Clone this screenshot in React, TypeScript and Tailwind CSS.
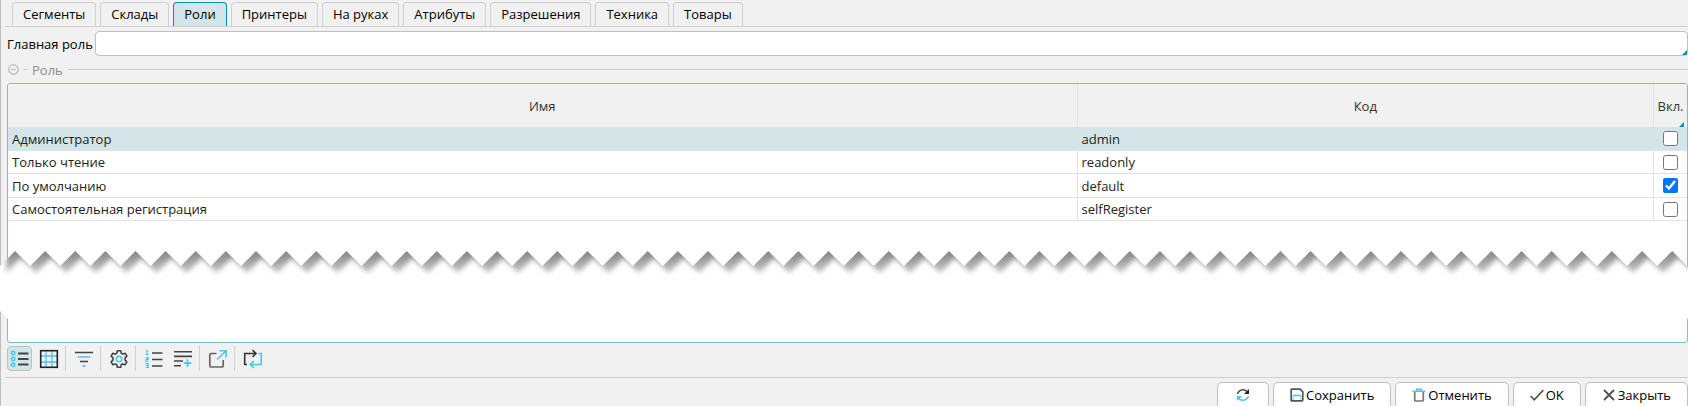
import { useState, type ReactNode } from "react";

const TABS = [
  "Сегменты",
  "Склады",
  "Роли",
  "Принтеры",
  "На руках",
  "Атрибуты",
  "Разрешения",
  "Техника",
  "Товары",
];

const ROLES = [
  { name: "Администратор", code: "admin", on: false },
  { name: "Только чтение", code: "readonly", on: false },
  { name: "По умолчанию", code: "default", on: true },
  { name: "Самостоятельная регистрация", code: "selfRegister", on: false },
];

const TOOTH = 30.13;
const TEETH = 120;

function zigzag() {
  let d = "";
  for (let i = 0; i < TEETH; i++) {
    d += ` L${(i * TOOTH + 15).toFixed(2)} 0 L${((i + 1) * TOOTH).toFixed(2)} 15`;
  }
  return d;
}

const TEAR = `M0 -20 L0 15${zigzag()} V-20 Z`;
const BAND = `M0 15${zigzag()} V68 H8 L0 60 Z`;

function Tear() {
  return (
    <svg className="pointer-events-none absolute bottom-[24px] -left-px h-[68px] w-[calc(100%+1px)]" aria-hidden="true">
      <defs>
        <clipPath id="band">
          <path d={BAND} />
        </clipPath>
        <filter id="soft" x="-1%" y="-50%" width="102%" height="200%">
          <feGaussianBlur stdDeviation="2.4" />
        </filter>
        <linearGradient id="fade" gradientUnits="userSpaceOnUse" x1="0" y1="-6" x2="0" y2="14">
          <stop offset="0" stopColor="#868686" />
          <stop offset="1" stopColor="#c4c4c4" />
        </linearGradient>
      </defs>
      <g clipPath="url(#band)">
        <rect width="100%" height="68" fill="#fff" />
        <path d={TEAR} fill="url(#fade)" transform="translate(6 7)" filter="url(#soft)" />
      </g>
    </svg>
  );
}

const DARK = "#444";
const BLUE = "#4fc3f0";

function Icon({ children, size = 20 }: { children: ReactNode; size?: number }) {
  return (
    <svg width={size} height={size} viewBox={`0 0 ${size} ${size}`} fill="none" stroke={DARK} strokeWidth="1.5" aria-hidden="true">
      {children}
    </svg>
  );
}

const ListIcon = () => (
  <Icon>
    <g stroke={BLUE} strokeWidth="1.5">
      <circle cx="3.2" cy="4" r="1.7" />
      <circle cx="3.2" cy="10" r="1.7" />
      <circle cx="3.2" cy="15.8" r="1.7" />
    </g>
    <path d="M8 4.5h10.5M8 10h10.5M8 15.5h10.5" strokeWidth="1.8" />
  </Icon>
);

const GridIcon = () => (
  <Icon>
    <path d="M7 2v16M13 2v16M2 7h16M2 13h16" stroke={BLUE} strokeWidth="1.3" />
    <rect x="1.7" y="1.7" width="16.6" height="16.6" stroke="#222" strokeWidth="1.6" />
  </Icon>
);

const FilterIcon = () => (
  <Icon>
    <path d="M1 3.5h18M6 12.5h8" strokeWidth="1.7" />
    <path d="M3.500 8h13M8.300 17h3.400" stroke={BLUE} strokeWidth="1.6" />
  </Icon>
);

const GearIcon = () => (
  <Icon>
    <path
      d="M8.300 1.700h3.400l.5 2.500 1.600.9 2.400-.8 1.700 2.900-1.900 1.700v2.200l1.900 1.700-1.700 2.900-2.400-.8-1.600.9-.5 2.500H8.300l-.5-2.500-1.600-.9-2.400.8-1.700-2.900L4 11.100V8.900L2.100 7.200l1.700-2.900 2.400.8 1.600-.9z"
      strokeLinejoin="round"
      strokeWidth="1.600"
    />
    <circle cx="10" cy="10" r="2.700" stroke={BLUE} />
  </Icon>
);

const NumberedIcon = () => (
  <Icon>
    <path d="M8 4h10.500M8 10.500h10.500M8 17h10.500" strokeWidth="1.7" />
    <g stroke={BLUE} strokeWidth="1.200">
      <path d="M1.800 2.300l1.300-.8v4M1.700 5.500h2.900" />
      <path d="M1.700 8.700h2.600v1.700H1.900v1.900h2.700" />
      <path d="M1.700 14.700h2.600v3.800H1.700M2.200 16.600h2" />
    </g>
  </Icon>
);

const AddRowIcon = () => (
  <Icon>
    <path d="M1 2.700h18M1 7.400h18M1 12h9M1 16.700h7" strokeWidth="1.6" />
    <path d="M14.500 10.500v7.500M10.800 14.200h7.500" stroke={BLUE} strokeWidth="1.800" />
  </Icon>
);

const ExternalIcon = () => (
  <Icon>
    <path d="M8.500 4.500H3a1.200 1.200 0 0 0-1.200 1.200v11.100A1.200 1.200 0 0 0 3 18h11a1.200 1.200 0 0 0 1.200-1.200V11" stroke="#666" strokeWidth="1.700" />
    <path d="M9 10.500L18 2M11.500 1.800H18.200V8.500" stroke={BLUE} strokeWidth="1.600" />
  </Icon>
);

const LoopIcon = () => (
  <Icon>
    <path d="M4 15.500H1.700V4.500H13M9.500 1.200L13 4.500L9.500 7.800" stroke="#333" strokeWidth="1.600" />
    <path d="M15.500 4.500h2.800v11H7.500M10.800 12.200L7.300 15.500l3.500 3.300" stroke={BLUE} strokeWidth="1.600" />
  </Icon>
);

const RefreshIcon = () => (
  <Icon size={14}>
    <path d="M1.500 6A5.700 5.700 0 0 1 11.500 4" strokeWidth="1.400" />
    <path d="M13 1v5H8z" fill="#222" stroke="none" />
    <path d="M12.500 8A5.700 5.700 0 0 1 2.500 10" stroke={BLUE} strokeWidth="1.400" />
    <path d="M1 13V8h5z" fill={BLUE} stroke="none" />
  </Icon>
);

const SaveIcon = () => (
  <Icon size={14}>
    <path d="M1.700 1.200h8.300l2.800 2.600v8.200a.9.900 0 0 1-.9.900H1.700a.5.500 0 0 1-.5-.5V1.700a.5.500 0 0 1 .5-.5z" stroke="#555" strokeWidth="1.700" />
    <path d="M3 7.500h8" stroke={BLUE} strokeWidth="1.600" />
    <path d="M3 8v4M11 8v4" stroke={BLUE} strokeWidth=".8" />
  </Icon>
);

const TrashIcon = () => (
  <Icon size={14}>
    <path d="M2.700 4v8a1 1 0 0 0 1 1h6.600a1 1 0 0 0 1-1V4" stroke="#777" strokeWidth="1.700" />
    <path d="M.5 3.200h13M4.800 3V1.200h4.400V3" stroke={BLUE} strokeWidth="1.500" />
  </Icon>
);

const CheckIcon = () => (
  <Icon size={14}>
    <path d="M.7 8l3.600 3.800L13.300 2.200" stroke="#555" strokeWidth="1.700" />
  </Icon>
);

const CloseIcon = () => (
  <Icon size={14}>
    <path d="M2 2l10 10M12 2L2 12" stroke="#555" strokeWidth="2" />
  </Icon>
);

const TOOLS: { label: string; icon: ReactNode }[][] = [
  [
    { label: "Список", icon: <ListIcon /> },
    { label: "Сетка", icon: <GridIcon /> },
  ],
  [{ label: "Фильтр", icon: <FilterIcon /> }],
  [{ label: "Настройки", icon: <GearIcon /> }],
  [
    { label: "Нумерация", icon: <NumberedIcon /> },
    { label: "Добавить строку", icon: <AddRowIcon /> },
  ],
  [{ label: "Открыть", icon: <ExternalIcon /> }],
  [{ label: "Повторить", icon: <LoopIcon /> }],
];

function Corner({ className }: { className: string }) {
  return <span className={`pointer-events-none absolute size-[5px] bg-[#0a8bbd] [clip-path:polygon(100%_0,100%_100%,0_100%)] ${className}`} />;
}

function ActionButton({ icon, label, text }: { icon: ReactNode; label?: string; text?: string }) {
  return (
    <button
      type="button"
      aria-label={label}
      className={`flex h-[27px] items-center gap-[2px] rounded-[5px] border border-[#c0c0c0] bg-white pb-[2px] text-black ${
        text ? "px-4" : "px-[18px]"
      }`}
    >
      {icon}
      {text}
    </button>
  );
}

export default function App() {
  const [tab, setTab] = useState("Роли");
  const [view, setView] = useState("Список");
  const [enabled, setEnabled] = useState(ROLES.map((r) => r.on));

  return (
    <div className="flex h-screen flex-col overflow-hidden bg-[#f1f1f1] pl-px font-['Open_Sans','Noto_Sans',sans-serif] text-[13px] leading-[18px] text-black shadow-[inset_1px_0_0_#bdbdbd]">
      <div role="tablist" className="ml-1 flex shrink-0 gap-1 border-b border-[#cfcfcf] pt-[2px] pl-[7px]">
        {TABS.map((t) => (
          <button
            key={t}
            type="button"
            role="tab"
            aria-selected={t === tab}
            onClick={() => setTab(t)}
            className={`h-6 rounded-t-[4px] border border-b-0 px-[10px] pb-[2px] whitespace-nowrap ${
              t === tab ? "border-[#0a8bbd] bg-[#d4e5e9]" : "border-[#cfcfcf]"
            }`}
          >
            {t}
          </button>
        ))}
      </div>

      <div className="mt-1 flex shrink-0 items-center gap-[2px] pl-[6px]">
        <label htmlFor="main-role" className="whitespace-nowrap">
          Главная роль
        </label>
        <div className="relative flex flex-1">
          <input id="main-role" type="text" className="h-[25px] w-full rounded-[4px] border border-[#c0c0c0] bg-white px-1 outline-none" />
          <Corner className="right-px bottom-px" />
        </div>
      </div>

      <div className="flex h-[27px] shrink-0 items-center pl-[7px] text-[#8c8c8c]">
        <button type="button" aria-label="Свернуть" className="mr-1">
          <svg width="11" height="11" viewBox="0 0 11 11" fill="none" stroke="#bdbdbd" aria-hidden="true">
            <circle cx="5.5" cy="5.5" r="4.700" strokeWidth="1.400" />
            <path d="M3 5.500h5" strokeWidth="1.200" />
          </svg>
        </button>
        <span className="h-px w-1 bg-[#cfcfcf]" />
        <span className="px-[5px]">Роль</span>
        <span className="h-px flex-1 bg-[#cfcfcf]" />
      </div>

      <div className="relative flex min-h-0 flex-1 flex-col pl-[6px]">
        <div className="flex-1 overflow-hidden rounded-[3px] border border-[#7fbccd] bg-white">
          <table className="w-full table-fixed border-separate border-spacing-0 text-[#222]">
            <colgroup>
              <col className="w-[63.7%]" />
              <col />
              <col className="w-[33px]" />
            </colgroup>
            <thead>
              <tr className="h-[43px] bg-[#f1f1f1] text-[#333]">
                <th className="border-r border-[#e3e3e3] p-0 font-normal">Имя</th>
                <th className="border-r border-[#e3e3e3] p-0 font-normal">Код</th>
                <th className="relative p-0 font-normal">
                  Вкл.
                  <Corner className="right-[3px] bottom-0" />
                </th>
              </tr>
            </thead>
            <tbody>
              {ROLES.map((r, i) => (
                <tr key={r.code} className="odd:h-6 even:h-[23px] first:bg-[#d4e5e9]">
                  <td className="border-r border-b border-[#e3e3e3] px-1 py-0">{r.name}</td>
                  <td className="border-r border-b border-[#e3e3e3] px-1 py-0">{r.code}</td>
                  <td className="border-b border-[#e3e3e3] p-0">
                    <input
                      type="checkbox"
                      aria-label={r.name}
                      checked={enabled[i]}
                      onChange={() => setEnabled(enabled.map((v, k) => (k === i ? !v : v)))}
                      className="mx-auto block size-[15px]"
                    />
                  </td>
                </tr>
              ))}
            </tbody>
          </table>
        </div>
        <Tear />
      </div>

      <div className="mt-[3px] ml-1 flex shrink-0 items-center border-b border-[#cfcfcf] pb-[6px] pl-[2px]">
        {TOOLS.map((group, g) => (
          <div key={g} className={`flex gap-1 ${g > 0 ? "border-l border-[#cfcfcf] pl-[5px]" : ""} ${g < TOOLS.length - 1 ? "pr-1" : ""}`}>
            {group.map((tool) => (
              <button
                key={tool.label}
                type="button"
                aria-label={tool.label}
                onClick={() => setView(tool.label)}
                className={`flex size-[25px] items-center justify-center rounded-[4px] border ${
                  view === tool.label ? "border-[#c0c0c0] bg-[#d4e5e9]" : "border-transparent"
                }`}
              >
                {tool.icon}
              </button>
            ))}
          </div>
        ))}
      </div>

      <div className="mt-1 -mb-[3px] flex shrink-0 justify-end gap-1">
        <ActionButton label="Обновить" icon={<RefreshIcon />} />
        <ActionButton text="Сохранить" icon={<SaveIcon />} />
        <ActionButton text="Отменить" icon={<TrashIcon />} />
        <ActionButton text="OK" icon={<CheckIcon />} />
        <ActionButton text="Закрыть" icon={<CloseIcon />} />
      </div>
    </div>
  );
}
